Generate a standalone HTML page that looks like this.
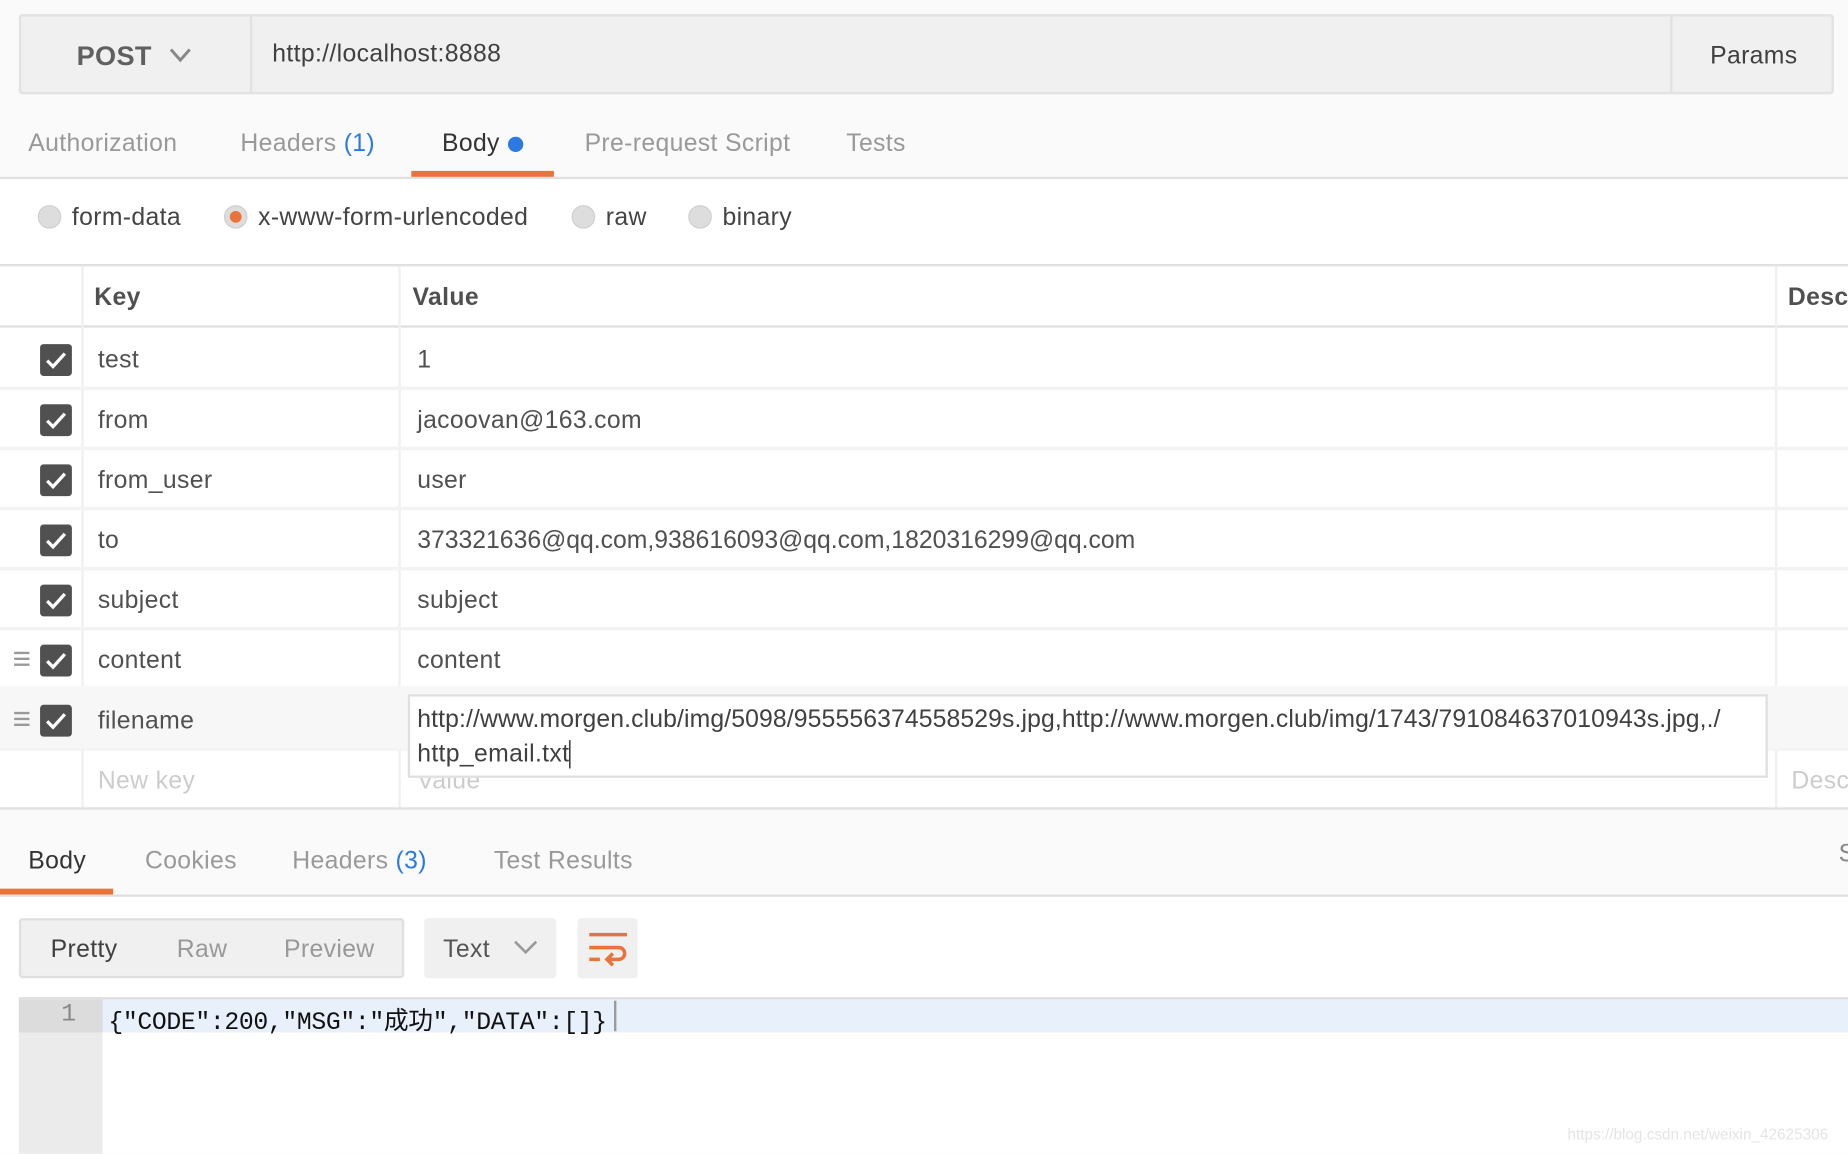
<!DOCTYPE html>
<html><head><meta charset="utf-8"><style>
*{margin:0;padding:0;box-sizing:border-box}
html,body{width:1848px;height:1154px;overflow:hidden;background:#fff}
#w{position:absolute;left:0;top:0;width:1568px;height:979px;transform:scale(1.17857);transform-origin:0 0;font-family:"Liberation Sans","Noto Sans CJK SC",sans-serif;color:#505050;font-size:21px;letter-spacing:0.3px;background:#fafafa}
.a{position:absolute;white-space:nowrap}
.chk{position:absolute;left:34px;width:27px;height:27px;background:#505050;border-radius:3px}
.chk svg{position:absolute;left:4px;top:5px}
.hr{position:absolute;left:0;width:1568px;height:2px;background:#e0e0e0}
.rad{position:absolute;width:20px;height:20px;border-radius:50%;background:#ddd;border:1px solid #cfcfcf}
.drag{position:absolute;left:12px;width:13px;height:12px;border-top:2px solid #999;border-bottom:2px solid #999}
.drag:after{content:"";position:absolute;left:0;right:0;top:3px;height:2px;background:#999}
</style></head><body><div id="w">
<div class="a" style="left:16px;top:12px;width:1540px;height:68px;background:#f0f0f0;border:2px solid #e2e2e2;border-radius:3px"></div>
<div class="a" style="left:212px;top:14px;width:2px;height:64px;background:#e2e2e2"></div>
<div class="a" style="left:1417px;top:14px;width:2px;height:64px;background:#e2e2e2"></div>
<div class="a" style="left:65px;top:34px;font-size:23px;font-weight:bold;color:#606060">POST</div>
<svg class="a" style="left:143px;top:40px" width="20" height="14"><path d="M2 2 L10 11 L18 2" fill="none" stroke="#888" stroke-width="2.5"/></svg>
<div class="a" style="left:231px;top:34px;color:#404040">http://localhost:8888</div>
<div class="a" style="left:1451px;top:36px;color:#404040">Params</div>
<div class="a" style="left:24px;top:110px;color:#999">Authorization</div>
<div class="a" style="left:204px;top:110px;color:#999">Headers <span style="color:#2a7ae2">(1)</span></div>
<div class="a" style="left:375px;top:110px;color:#333">Body</div>
<div class="a" style="left:431px;top:116px;width:13px;height:13px;border-radius:50%;background:#2a7ae2"></div>
<div class="a" style="left:496px;top:110px;color:#999">Pre-request Script</div>
<div class="a" style="left:718px;top:110px;color:#999">Tests</div>
<div class="a" style="left:349px;top:145px;width:121px;height:6px;background:#e8743b"></div>
<div class="hr" style="top:150px"></div>
<div class="a" style="left:0;top:152px;width:1568px;height:534px;background:#fff"></div>
<div class="rad" style="left:32px;top:174px"></div>
<div class="a" style="left:61px;top:173px;color:#444">form-data</div>
<div class="rad" style="left:190px;top:174px"><div style="position:absolute;left:4px;top:4px;width:10px;height:10px;border-radius:50%;background:#e8743b"></div></div>
<div class="a" style="left:219px;top:173px;color:#444">x-www-form-urlencoded</div>
<div class="rad" style="left:485px;top:174px"></div>
<div class="a" style="left:514px;top:173px;color:#444">raw</div>
<div class="rad" style="left:584px;top:174px"></div>
<div class="a" style="left:613px;top:173px;color:#444">binary</div>
<div class="hr" style="top:224px"></div>
<div class="hr" style="top:276px"></div>
<div class="a" style="left:69px;top:226px;width:2px;height:460px;background:#f0f0f0"></div>
<div class="a" style="left:338px;top:226px;width:2px;height:460px;background:#f0f0f0"></div>
<div class="a" style="left:1506px;top:226px;width:2px;height:460px;background:#f0f0f0"></div>
<div class="a" style="left:80px;top:241px;font-weight:bold">Key</div>
<div class="a" style="left:350px;top:241px;font-weight:bold">Value</div>
<div class="a" style="left:1517px;top:241px;font-weight:bold">Descr</div>
<div class="a" style="left:0;top:582px;width:1568px;height:53px;background:#f7f7f7"></div>
<div class="a" style="left:0;top:328px;width:1568px;height:3px;background:#f3f3f3"></div>
<div class="a" style="left:0;top:379px;width:1568px;height:3px;background:#f3f3f3"></div>
<div class="a" style="left:0;top:430px;width:1568px;height:3px;background:#f3f3f3"></div>
<div class="a" style="left:0;top:481px;width:1568px;height:3px;background:#f3f3f3"></div>
<div class="a" style="left:0;top:532px;width:1568px;height:3px;background:#f3f3f3"></div>
<div class="a" style="left:0;top:635px;width:1568px;height:2px;background:#f3f3f3"></div>

<div class="chk" style="top:292px"><svg width="19" height="17"><path d="M2 9 L7 14 L17 3" fill="none" stroke="#fff" stroke-width="2.8"/></svg></div>
<div class="a" style="left:83px;top:294px">test</div><div class="a" style="left:354px;top:294px">1</div>
<div class="chk" style="top:343px"><svg width="19" height="17"><path d="M2 9 L7 14 L17 3" fill="none" stroke="#fff" stroke-width="2.8"/></svg></div>
<div class="a" style="left:83px;top:345px">from</div><div class="a" style="left:354px;top:345px">jacoovan@163.com</div>
<div class="chk" style="top:394px"><svg width="19" height="17"><path d="M2 9 L7 14 L17 3" fill="none" stroke="#fff" stroke-width="2.8"/></svg></div>
<div class="a" style="left:83px;top:396px">from_user</div><div class="a" style="left:354px;top:396px">user</div>
<div class="chk" style="top:445px"><svg width="19" height="17"><path d="M2 9 L7 14 L17 3" fill="none" stroke="#fff" stroke-width="2.8"/></svg></div>
<div class="a" style="left:83px;top:447px">to</div><div class="a" style="left:354px;top:447px;letter-spacing:0">373321636@qq.com,938616093@qq.com,1820316299@qq.com</div>
<div class="chk" style="top:496px"><svg width="19" height="17"><path d="M2 9 L7 14 L17 3" fill="none" stroke="#fff" stroke-width="2.8"/></svg></div>
<div class="a" style="left:83px;top:498px">subject</div><div class="a" style="left:354px;top:498px">subject</div>
<div class="drag" style="top:553px"></div>
<div class="chk" style="top:547px"><svg width="19" height="17"><path d="M2 9 L7 14 L17 3" fill="none" stroke="#fff" stroke-width="2.8"/></svg></div>
<div class="a" style="left:83px;top:549px">content</div><div class="a" style="left:354px;top:549px">content</div>
<div class="drag" style="top:604px"></div>
<div class="chk" style="top:598px"><svg width="19" height="17"><path d="M2 9 L7 14 L17 3" fill="none" stroke="#fff" stroke-width="2.8"/></svg></div>
<div class="a" style="left:83px;top:600px">filename</div>
<div class="a" style="left:83px;top:651px;color:#ccc">New key</div>
<div class="a" style="left:354px;top:651px;color:#ccc">Value</div>
<div class="a" style="left:1520px;top:651px;color:#ccc">Desc</div>
<div class="a" style="left:346px;top:589px;width:1154px;height:71px;background:#fff;border:2px solid #e0e0e0"></div>
<div class="a" style="left:354px;top:599px;color:#404040;letter-spacing:0.1px">http://www.morgen.club/img/5098/955556374558529s.jpg,http://www.morgen.club/img/1743/791084637010943s.jpg,./</div>
<div class="a" style="left:354px;top:628px;color:#404040">http_email.txt<span style="display:inline-block;width:1px;height:24px;background:#000;vertical-align:middle"></span></div>
<div class="hr" style="top:685px"></div>
<div class="a" style="left:24px;top:719px;color:#333">Body</div>
<div class="a" style="left:123px;top:719px;color:#999">Cookies</div>
<div class="a" style="left:248px;top:719px;color:#999">Headers <span style="color:#2a7ae2">(3)</span></div>
<div class="a" style="left:419px;top:719px;color:#999">Test Results</div>
<div class="a" style="left:1560px;top:713px;color:#888">S</div>
<div class="a" style="left:0;top:754px;width:96px;height:6px;background:#e8743b"></div>
<div class="hr" style="top:759px"></div>
<div class="a" style="left:0;top:761px;width:1568px;height:218px;background:#fff"></div>
<div class="a" style="left:16px;top:779px;width:327px;height:51px;background:#f0f0f0;border:2px solid #e0e0e0;border-radius:3px"></div>
<div class="a" style="left:43px;top:794px;color:#404040">Pretty</div>
<div class="a" style="left:150px;top:794px;color:#999">Raw</div>
<div class="a" style="left:241px;top:794px;color:#999">Preview</div>
<div class="a" style="left:360px;top:779px;width:112px;height:51px;background:#f0f0f0;border-radius:3px"></div>
<div class="a" style="left:376px;top:794px;color:#555">Text</div>
<svg class="a" style="left:435px;top:797px" width="22" height="14"><path d="M2 2 L11 11 L20 2" fill="none" stroke="#999" stroke-width="2.2"/></svg>
<div class="a" style="left:490px;top:779px;width:51px;height:51px;background:#f0f0f0;border-radius:3px"></div>
<svg class="a" style="left:499px;top:790px" width="34" height="30"><path d="M1 3 H33" stroke="#e8743b" stroke-width="3"/><path d="M1 14 H26 a5 5 0 0 1 0 10 H18" fill="none" stroke="#e8743b" stroke-width="3"/><path d="M1 24 H10" stroke="#e8743b" stroke-width="3"/><path d="M21 19 L16 24 L21 29" fill="none" stroke="#e8743b" stroke-width="3"/></svg>
<div class="a" style="left:16px;top:846px;width:1552px;height:2px;background:#e0e0e0"></div>
<div class="a" style="left:16px;top:848px;width:71px;height:131px;background:#ebebeb"></div>
<div class="a" style="left:16px;top:848px;width:71px;height:28px;background:#dcdcdc"></div>
<div class="a" style="left:87px;top:848px;width:1481px;height:28px;background:#e8f0fb"></div>
<div class="a" style="left:52px;top:850px;font-family:'Liberation Mono',monospace;color:#888;font-size:21px;letter-spacing:0">1</div>
<div class="a" style="left:92px;top:850px;font-family:'Liberation Mono','Noto Sans CJK SC',monospace;color:#111;font-size:21px;letter-spacing:-0.3px">{"CODE":200,"MSG":"成功","DATA":[]}</div>
<div class="a" style="left:521px;top:849px;width:2px;height:26px;background:#999"></div>
<div class="a" style="left:1330px;top:955px;font-size:13px;letter-spacing:0;color:#e4e4e4">https://blog.csdn.net/weixin_42625306</div>
</div></body></html>
